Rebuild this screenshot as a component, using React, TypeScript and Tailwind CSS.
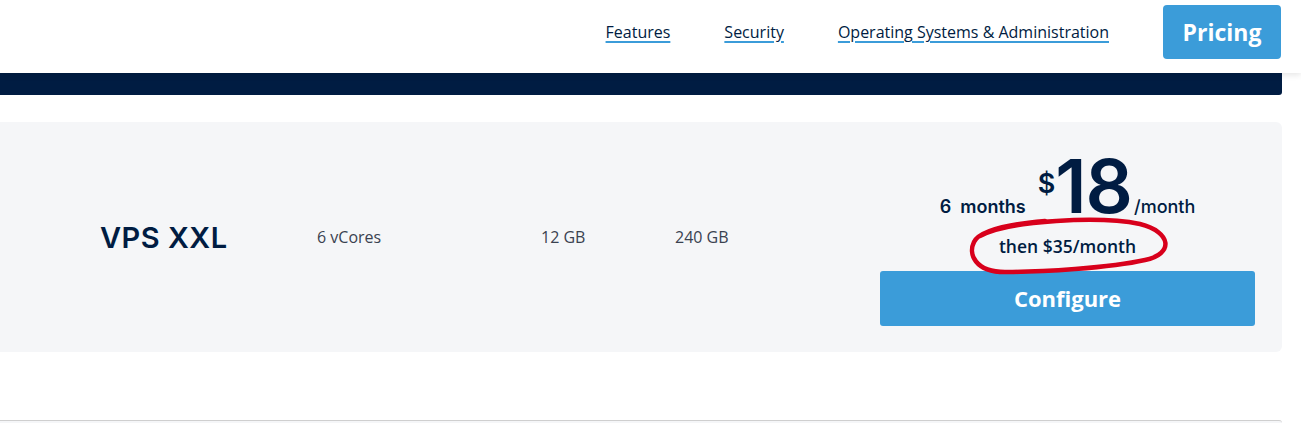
import React from "react";

const navy = "text-[#001c42]";

function NavLink({ children }: { children: React.ReactNode }) {
  return (
    <a
      href="#"
      className={`${navy} text-[16px] underline decoration-[#3b9cd9] decoration-2 underline-offset-[3px]`}
      style={{ fontFamily: "'Open Sans', sans-serif" }}
    >
      {children}
    </a>
  );
}

export default function App() {
  return (
    <div className="relative w-[1301px] h-[423px] bg-white overflow-hidden" style={{ fontFamily: "'Open Sans', sans-serif" }}>
      {/* Header */}
      <header className="relative z-10 h-[73px] bg-white shadow-[0_2px_6px_rgba(0,0,0,0.10)] pr-[20px]">
        <div className="h-[64px] flex items-center">
          <nav className="ml-auto flex items-center">
            <div className="mr-[54px]"><NavLink>Features</NavLink></div>
            <div className="mr-[54px]"><NavLink>Security</NavLink></div>
            <div className="mr-[54px]"><NavLink>Operating Systems &amp; Administration</NavLink></div>
          </nav>
          <button className="h-[54px] w-[118px] rounded-[4px] bg-[#3b9cd9] text-white text-[23px] font-bold">
            Pricing
          </button>
        </div>
      </header>

      {/* Navy strip */}
      <div className="w-[1282px] h-[22px] bg-[#001c42] rounded-br-[3px]" />

      {/* Plan card */}
      <div className="mt-[27px] w-[1282px] h-[230px] bg-[#f5f6f8] rounded-r-[6px] flex items-center">
        <div className="pl-[100px] w-[317px] pt-[2px]">
          <span className={`${navy} text-[29px] font-semibold tracking-[0.5px]`} style={{ fontFamily: "Inter, sans-serif" }}>
            VPS XXL
          </span>
        </div>
        <div className="w-[224px] text-[16px] text-[#3a4250]">6 vCores</div>
        <div className="w-[134px] text-[16px] text-[#3a4250]">12 GB</div>
        <div className="text-[16px] text-[#3a4250]">240 GB</div>

        <div className="ml-auto mr-[27px] w-[375px] self-start pt-[32px] flex flex-col items-center">
          <div className={`flex items-baseline ${navy}`} style={{ fontFamily: "Inter, sans-serif" }}>
            <span className="text-[18px] font-semibold mr-[12px]">6&nbsp; months</span>
            <span className="text-[74px] font-semibold leading-[64px] tracking-[-1px]">
              <span className="text-[27px] align-top relative top-[-2px] mr-[1px]">$</span>18
            </span>
            <span className="text-[18px] font-medium ml-[2px]">/month</span>
          </div>
          <div className={`mt-[13px] text-[17.5px] font-semibold ${navy}`}>then $35/month</div>
          <button className="mt-[12px] w-[375px] h-[55px] rounded-[3px] bg-[#3b9cd9] text-white text-[22px] font-bold">
            Configure
          </button>
        </div>
      </div>

      {/* Next card edge */}
      <div className="mt-[68px] w-[1282px] h-[3px] border-t border-[#cfcfcf] bg-[#f5f6f8] rounded-tr-[3px]" />

      {/* Red hand-drawn annotation */}
      <svg className="absolute left-[960px] top-[212px] pointer-events-none" width="220" height="70" viewBox="0 0 220 70">
        <defs>
          <filter id="soft" x="-10%" y="-10%" width="120%" height="120%">
            <feGaussianBlur stdDeviation="0.6" />
          </filter>
        </defs>
        <path
          d="M 20 24 C 50 8, 140 4, 180 12 C 212 20, 214 42, 185 48 C 150 56, 80 60, 45 60 C 15 60, 8 42, 14 30 C 20 18, 50 12, 85 9"
          fill="none"
          stroke="#d8001a"
          strokeWidth="4.5"
          strokeLinecap="round"
          filter="url(#soft)"
        />
      </svg>
    </div>
  );
}
